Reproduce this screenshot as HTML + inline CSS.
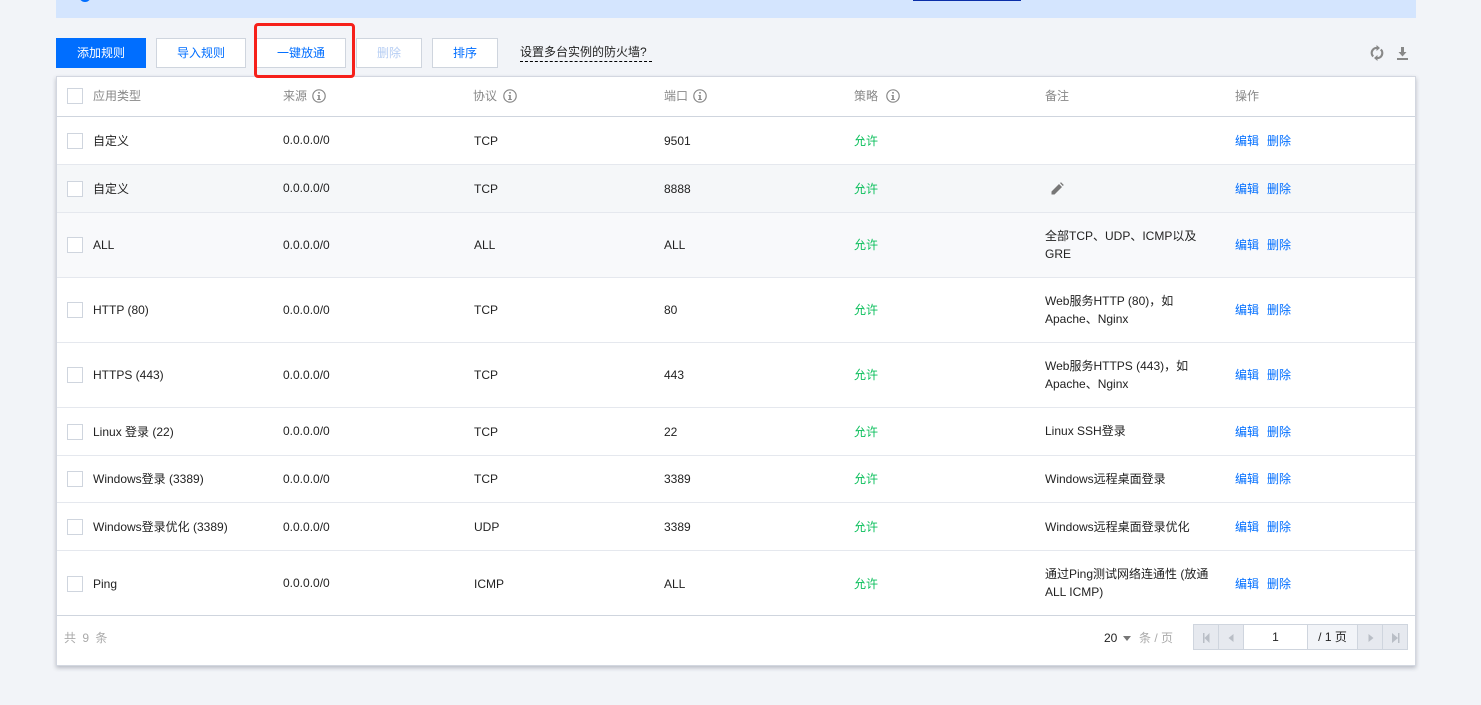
<!DOCTYPE html>
<html><head><meta charset="utf-8">
<style>
html,body{margin:0;padding:0;background:#f2f4f8;}
body{width:1481px;height:705px;overflow:hidden;position:relative;font-family:"Liberation Sans","Noto Sans CJK SC",sans-serif;font-size:12px;color:#222;}
div,span,svg{position:absolute;box-sizing:border-box;}
.t{white-space:nowrap;line-height:18px;height:18px;margin-top:1px;}
.s{margin-top:0;}
.btn{top:38px;height:30px;background:#fff;border:1px solid #cfd5de;color:#006eff;text-align:center;line-height:28px;}
.h{color:#888;top:86px;}
.cb{left:67px;width:16px;height:16px;background:#fff;border:1px solid #cfd5de;}
.r{left:57px;width:1358px;border-bottom:1px solid #e5e8ee;}
.g{color:#0abf5b;}
.l{color:#006eff;}
.pg{top:624px;height:26px;border:1px solid #cfd5de;background:#e6e9ef;}
.ar{fill:#b9bec6;}
</style></head><body>
<div style="left:56px;top:0;width:1360px;height:18px;background:#d4e5fe"></div>
<div style="left:79px;top:-10px;width:12px;height:12px;background:#006eff;border-radius:50%"></div>
<div style="left:913px;top:0;width:108px;height:1px;background:#0a2ea8"></div>

<div class="btn" style="left:56px;width:90px;background:#006eff;border-color:#006eff;color:#fff">添加规则</div>
<div class="btn" style="left:156px;width:90px">导入规则</div>
<div class="btn" style="left:256px;width:90px">一键放通</div>
<div class="btn" style="left:356px;width:66px;color:#b5cdf3">删除</div>
<div class="btn" style="left:432px;width:66px">排序</div>
<div class="s" style="left:520px;top:44px;width:132px;height:18px;border-bottom:1px dashed #000;line-height:17px;white-space:nowrap">设置多台实例的防火墙?</div>

<svg style="left:1369px;top:45px" width="16" height="16" viewBox="0 0 16 16"><path d="M4.200 11.500A5 5 0 0 1 8.500 3M11.800 4.500A5 5 0 0 1 7.500 13" fill="none" stroke="#888" stroke-width="2.200"/><path d="M7.500 0L11 3L7.500 6ZM8.500 10L5 13L8.500 16Z" fill="#888"/></svg>
<svg style="left:1396px;top:45px" width="13" height="16" viewBox="0 0 13 16"><path d="M5 2h3v5h2.500L6.500 11.500 2.500 7H5zM1 13h11v2H1z" fill="#888"/></svg>

<div style="left:56px;top:76px;width:1360px;height:590px;background:#fff;border:1px solid #d3d7e0;box-shadow:0 2px 4px rgba(54,58,80,.3)"></div>
<div class="r" style="top:77px;height:40px;border-bottom-color:#cfd5de"></div>
<div class="r" style="top:165px;height:48px;background:#f5f7f9"></div>
<div class="r" style="top:213px;height:65px;background:#f8f9fb"></div>
<div class="r" style="top:117px;height:48px"></div>
<div class="r" style="top:278px;height:65px"></div>
<div class="r" style="top:343px;height:65px"></div>
<div class="r" style="top:408px;height:48px"></div>
<div class="r" style="top:456px;height:47px"></div>
<div class="r" style="top:503px;height:48px"></div>
<div class="r" style="top:551px;height:65px;border-bottom-color:#cfd5de"></div>

<!-- highlight box -->
<div style="left:254px;top:23px;width:101px;height:55px;border:3px solid #f6201a;border-radius:4px"></div>

<div class="cb" style="top:88px"></div>
<div class="t h" style="left:93px">应用类型</div>
<div class="t h" style="left:283px">来源</div>
<div class="t h" style="left:473px">协议</div>
<div class="t h" style="left:664px">端口</div>
<div class="t h" style="left:854px">策略</div>
<div class="t h" style="left:1045px">备注</div>
<div class="t h" style="left:1235px">操作</div>
<svg style="left:312px;top:89px" width="14" height="14" viewBox="0 0 14 14"><circle cx="7" cy="7" r="6.200" fill="none" stroke="#888" stroke-width="1.200"/><path d="M6.200 3h1.600v1.600H6.200zM5.500 6H7.800v4h1v1H5.200v-1h1V7h-.7z" fill="#888"/></svg>
<svg style="left:503px;top:89px" width="14" height="14" viewBox="0 0 14 14"><circle cx="7" cy="7" r="6.200" fill="none" stroke="#888" stroke-width="1.200"/><path d="M6.200 3h1.600v1.600H6.200zM5.500 6H7.800v4h1v1H5.200v-1h1V7h-.7z" fill="#888"/></svg>
<svg style="left:693px;top:89px" width="14" height="14" viewBox="0 0 14 14"><circle cx="7" cy="7" r="6.200" fill="none" stroke="#888" stroke-width="1.200"/><path d="M6.200 3h1.600v1.600H6.200zM5.500 6H7.800v4h1v1H5.200v-1h1V7h-.7z" fill="#888"/></svg>
<svg style="left:886px;top:89px" width="14" height="14" viewBox="0 0 14 14"><circle cx="7" cy="7" r="6.200" fill="none" stroke="#888" stroke-width="1.200"/><path d="M6.200 3h1.600v1.600H6.200zM5.500 6H7.800v4h1v1H5.200v-1h1V7h-.7z" fill="#888"/></svg>

<!-- row 1 -->
<div class="cb" style="top:133px"></div>
<div class="t" style="left:93px;top:131px">自定义</div><div class="t s" style="left:283px;top:131px">0.0.0.0/0</div><div class="t" style="left:474px;top:131px">TCP</div><div class="t" style="left:664px;top:131px">9501</div><div class="t g" style="left:854px;top:131px">允许</div><div class="t l" style="left:1235px;top:131px">编辑</div><div class="t l" style="left:1267px;top:131px">删除</div>
<!-- row 2 -->
<div class="cb" style="top:181px"></div>
<div class="t" style="left:93px;top:179px">自定义</div><div class="t s" style="left:283px;top:179px">0.0.0.0/0</div><div class="t" style="left:474px;top:179px">TCP</div><div class="t" style="left:664px;top:179px">8888</div><div class="t g" style="left:854px;top:179px">允许</div><div class="t l" style="left:1235px;top:179px">编辑</div><div class="t l" style="left:1267px;top:179px">删除</div>
<svg style="left:1051px;top:182px" width="13" height="13" viewBox="0 0 13 13"><path d="M0.500 12.500V9.500L8 2l3 3-7.500 7.500zM9 1l1-.8 2.800 2.800-1 1z" fill="#777"/></svg>
<!-- row 3 -->
<div class="cb" style="top:237px"></div>
<div class="t" style="left:93px;top:235px">ALL</div><div class="t" style="left:283px;top:235px">0.0.0.0/0</div><div class="t" style="left:474px;top:235px">ALL</div><div class="t" style="left:664px;top:235px">ALL</div><div class="t g" style="left:854px;top:235px">允许</div><div class="t s" style="left:1045px;top:227px">全部TCP、UDP、ICMP以及</div><div class="t" style="left:1045px;top:244px">GRE</div><div class="t l" style="left:1235px;top:235px">编辑</div><div class="t l" style="left:1267px;top:235px">删除</div>
<!-- row 4 -->
<div class="cb" style="top:302px"></div>
<div class="t" style="left:93px;top:300px">HTTP (80)</div><div class="t" style="left:283px;top:300px">0.0.0.0/0</div><div class="t" style="left:474px;top:300px">TCP</div><div class="t" style="left:664px;top:300px">80</div><div class="t g" style="left:854px;top:300px">允许</div><div class="t" style="left:1045px;top:291px">Web服务HTTP (80)，如</div><div class="t" style="left:1045px;top:309px">Apache、Nginx</div><div class="t l" style="left:1235px;top:300px">编辑</div><div class="t l" style="left:1267px;top:300px">删除</div>
<!-- row 5 -->
<div class="cb" style="top:367px"></div>
<div class="t" style="left:93px;top:365px">HTTPS (443)</div><div class="t" style="left:283px;top:365px">0.0.0.0/0</div><div class="t" style="left:474px;top:365px">TCP</div><div class="t" style="left:664px;top:365px">443</div><div class="t g" style="left:854px;top:365px">允许</div><div class="t" style="left:1045px;top:356px">Web服务HTTPS (443)，如</div><div class="t" style="left:1045px;top:374px">Apache、Nginx</div><div class="t l" style="left:1235px;top:365px">编辑</div><div class="t l" style="left:1267px;top:365px">删除</div>
<!-- row 6 -->
<div class="cb" style="top:424px"></div>
<div class="t" style="left:93px;top:422px">Linux 登录 (22)</div><div class="t s" style="left:283px;top:422px">0.0.0.0/0</div><div class="t" style="left:474px;top:422px">TCP</div><div class="t" style="left:664px;top:422px">22</div><div class="t g" style="left:854px;top:422px">允许</div><div class="t" style="left:1045px;top:421px">Linux SSH登录</div><div class="t l" style="left:1235px;top:422px">编辑</div><div class="t l" style="left:1267px;top:422px">删除</div>
<!-- row 7 -->
<div class="cb" style="top:471px"></div>
<div class="t" style="left:93px;top:469px">Windows登录 (3389)</div><div class="t" style="left:283px;top:469px">0.0.0.0/0</div><div class="t" style="left:474px;top:469px">TCP</div><div class="t" style="left:664px;top:469px">3389</div><div class="t g" style="left:854px;top:469px">允许</div><div class="t" style="left:1045px;top:469px">Windows远程桌面登录</div><div class="t l" style="left:1235px;top:469px">编辑</div><div class="t l" style="left:1267px;top:469px">删除</div>
<!-- row 8 -->
<div class="cb" style="top:519px"></div>
<div class="t" style="left:93px;top:517px">Windows登录优化 (3389)</div><div class="t" style="left:283px;top:517px">0.0.0.0/0</div><div class="t" style="left:474px;top:517px">UDP</div><div class="t" style="left:664px;top:517px">3389</div><div class="t g" style="left:854px;top:517px">允许</div><div class="t" style="left:1045px;top:517px">Windows远程桌面登录优化</div><div class="t l" style="left:1235px;top:517px">编辑</div><div class="t l" style="left:1267px;top:517px">删除</div>
<!-- row 9 -->
<div class="cb" style="top:576px"></div>
<div class="t" style="left:93px;top:574px">Ping</div><div class="t s" style="left:283px;top:574px">0.0.0.0/0</div><div class="t" style="left:474px;top:574px">ICMP</div><div class="t" style="left:664px;top:574px">ALL</div><div class="t g" style="left:854px;top:574px">允许</div><div class="t s" style="left:1045px;top:565px">通过Ping测试网络连通性 (放通</div><div class="t s" style="left:1045px;top:583px">ALL ICMP)</div><div class="t l" style="left:1235px;top:574px">编辑</div><div class="t l" style="left:1267px;top:574px">删除</div>

<!-- footer -->
<div class="t" style="left:64px;top:628px;color:#aaa;word-spacing:3px">共 9 条</div>
<div class="t" style="left:1104px;top:628px">20</div>
<div style="left:1123px;top:636px;width:0;height:0;border:4px solid transparent;border-top:5px solid #777;border-bottom:0"></div>
<div class="t" style="left:1139px;top:628px;color:#aaa">条 / 页</div>

<div class="pg" style="left:1193px;width:26px"></div>
<div class="pg" style="left:1218px;width:26px"></div>
<div class="pg" style="left:1243px;width:65px;background:#fff;text-align:center;line-height:24px;color:#222">1</div>
<div class="pg" style="left:1307px;width:51px;background:#f2f4f8;text-align:center;line-height:24px;color:#222">/ 1 页</div>
<div class="pg" style="left:1357px;width:26px"></div>
<div class="pg" style="left:1382px;width:26px"></div>
<svg style="left:1202px;top:633px" width="10" height="10" viewBox="0 0 10 10"><path class="ar" d="M1 0h1.500v10H1zM7.500 0v10L2.500 5z"/></svg>
<svg style="left:1227px;top:633px" width="10" height="10" viewBox="0 0 10 10"><path class="ar" d="M6.500 1v8L1.500 5z"/></svg>
<svg style="left:1367px;top:633px" width="10" height="10" viewBox="0 0 10 10"><path class="ar" d="M1.500 1v8l5-4z"/></svg>
<svg style="left:1391px;top:633px" width="10" height="10" viewBox="0 0 10 10"><path class="ar" d="M7 0h1.500v10H7zM1 0v10l6-5z"/></svg>
</body></html>
